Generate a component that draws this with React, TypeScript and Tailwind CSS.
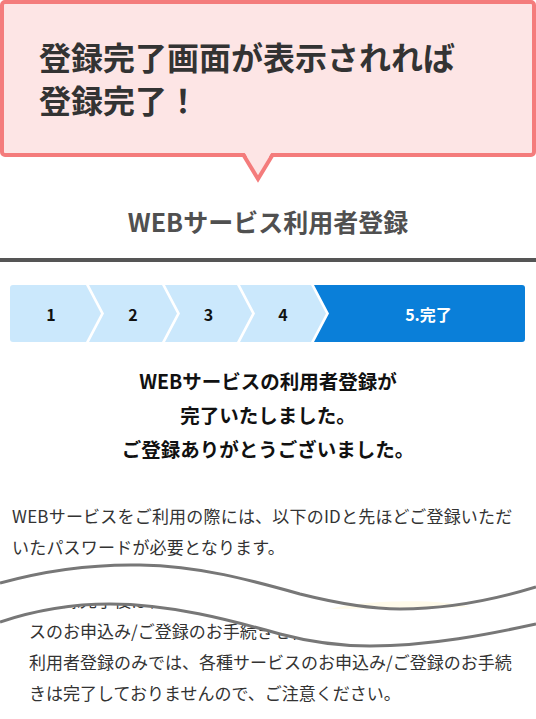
import React from 'react';

const UPPER =
  'M0,583 C40,572 90,564 140,565 C200,566 250,580 300,594 C340,604 370,609 400,609 C450,609 500,598 536,587';
const LOWER =
  'M0,622 C30,612 70,604 110,604 C170,604 230,620 280,634 C310,642 340,646 370,646 C430,646 490,634 536,624';
const GAP =
  UPPER +
  ' L536,624 C490,634 430,646 370,646 C340,646 310,642 280,634 C230,620 170,604 110,604 C70,604 30,612 0,622 Z';

const steps = [
  { label: '1', cls: 'w-[91px] pr-[9px] rounded-l-[3px] [clip-path:polygon(0_0,calc(100%_-_15px)_0,100%_50%,calc(100%_-_15px)_100%,0_100%)]' },
  { label: '2', cls: 'w-[88px] ml-[-12px] [clip-path:polygon(0_0,calc(100%_-_15px)_0,100%_50%,calc(100%_-_15px)_100%,0_100%,15px_50%)]' },
  { label: '3', cls: 'w-[87px] ml-[-12px] [clip-path:polygon(0_0,calc(100%_-_15px)_0,100%_50%,calc(100%_-_15px)_100%,0_100%,15px_50%)]' },
  { label: '4', cls: 'w-[86px] ml-[-12px] [clip-path:polygon(0_0,calc(100%_-_15px)_0,100%_50%,calc(100%_-_15px)_100%,0_100%,15px_50%)]' },
];

const StepBar = () => (
  <div className="mx-[10px] mt-[23px] flex h-[57px] w-[515px]">
    {steps.map((s) => (
      <div
        key={s.label}
        className={`flex shrink-0 items-center justify-center bg-[#cbe8fc] text-[16px] font-bold text-[#111] ${s.cls}`}
      >
        {s.label}
      </div>
    ))}
    <div className="ml-[-12px] flex flex-1 items-center justify-center rounded-r-[3px] bg-[#0a7fd9] pl-[18px] text-[16px] font-bold text-white [clip-path:polygon(0_0,100%_0,100%_100%,0_100%,15px_50%)]">
      5.完了
    </div>
  </div>
);

export default function App() {
  return (
    <div className="relative h-[719px] w-full overflow-hidden bg-white font-['Noto_Sans_CJK_JP','Noto_Sans',sans-serif]">
      {/* callout */}
      <div className="relative">
        <div className="h-[157px] rounded-[5px] border-4 border-[#f47c7c] bg-[#fde5e5] pl-[35px] pt-[31px] text-[32px] font-bold leading-[43px] text-[#333]">
          登録完了画面が表示されれば
          <br />
          登録完了！
        </div>
        <svg
          className="absolute left-[236px] top-[148px] h-[40px] w-[44px]"
          viewBox="236 148 44 40"
        >
          <polygon points="243,150 273,150 258,176" fill="#fde5e5" />
          <polyline
            points="243.5,155 258,179 272.5,155"
            fill="none"
            stroke="#f47c7c"
            strokeWidth="4"
          />
        </svg>
      </div>

      {/* heading */}
      <div className="pt-[46px] pb-[18px] text-center text-[25px] font-bold leading-[37px] text-[#505050]">
        WEBサービス利用者登録
      </div>
      <div className="h-[4px] bg-[#555]" />

      <StepBar />

      <div className="mt-[22px] text-center text-[19.5px] font-bold leading-[34px] text-[#111]">
        WEBサービスの利用者登録が
        <br />
        完了いたしました。
        <br />
        ご登録ありがとうございました。
      </div>

      <p className="mt-[34px] px-[12px] text-[17px] leading-[31px] tracking-[0.2px] text-[#333] whitespace-nowrap">
        WEBサービスをご利用の際には、以下のIDと先ほどご登録いただ
        <br />
        いたパスワードが必要となります。
      </p>

      <div className="mt-[22px] pl-[29px] text-[17px] leading-[31px] text-[#333] whitespace-nowrap">
        ご登録完了後は各種サービ
        <br />
        スのお申込み/ご登録のお手続きを行ってください。
        <br />
        利用者登録のみでは、各種サービスのお申込み/ご登録のお手続
        <br />
        きは完了しておりませんので、ご注意ください。
      </div>

      {/* cut-off wave */}
      <svg
        className="absolute left-0 top-[555px] h-[100px] w-[536px]"
        viewBox="0 555 536 100"
        preserveAspectRatio="none"
      >
        <path d={GAP} fill="#fff" />
        <path d="M330,609 C360,600 440,598 470,607 Z" fill="#fffbea" />
        <path d={UPPER} fill="none" stroke="#777" strokeWidth="3" />
        <path d={LOWER} fill="none" stroke="#777" strokeWidth="3" />
      </svg>
    </div>
  );
}
